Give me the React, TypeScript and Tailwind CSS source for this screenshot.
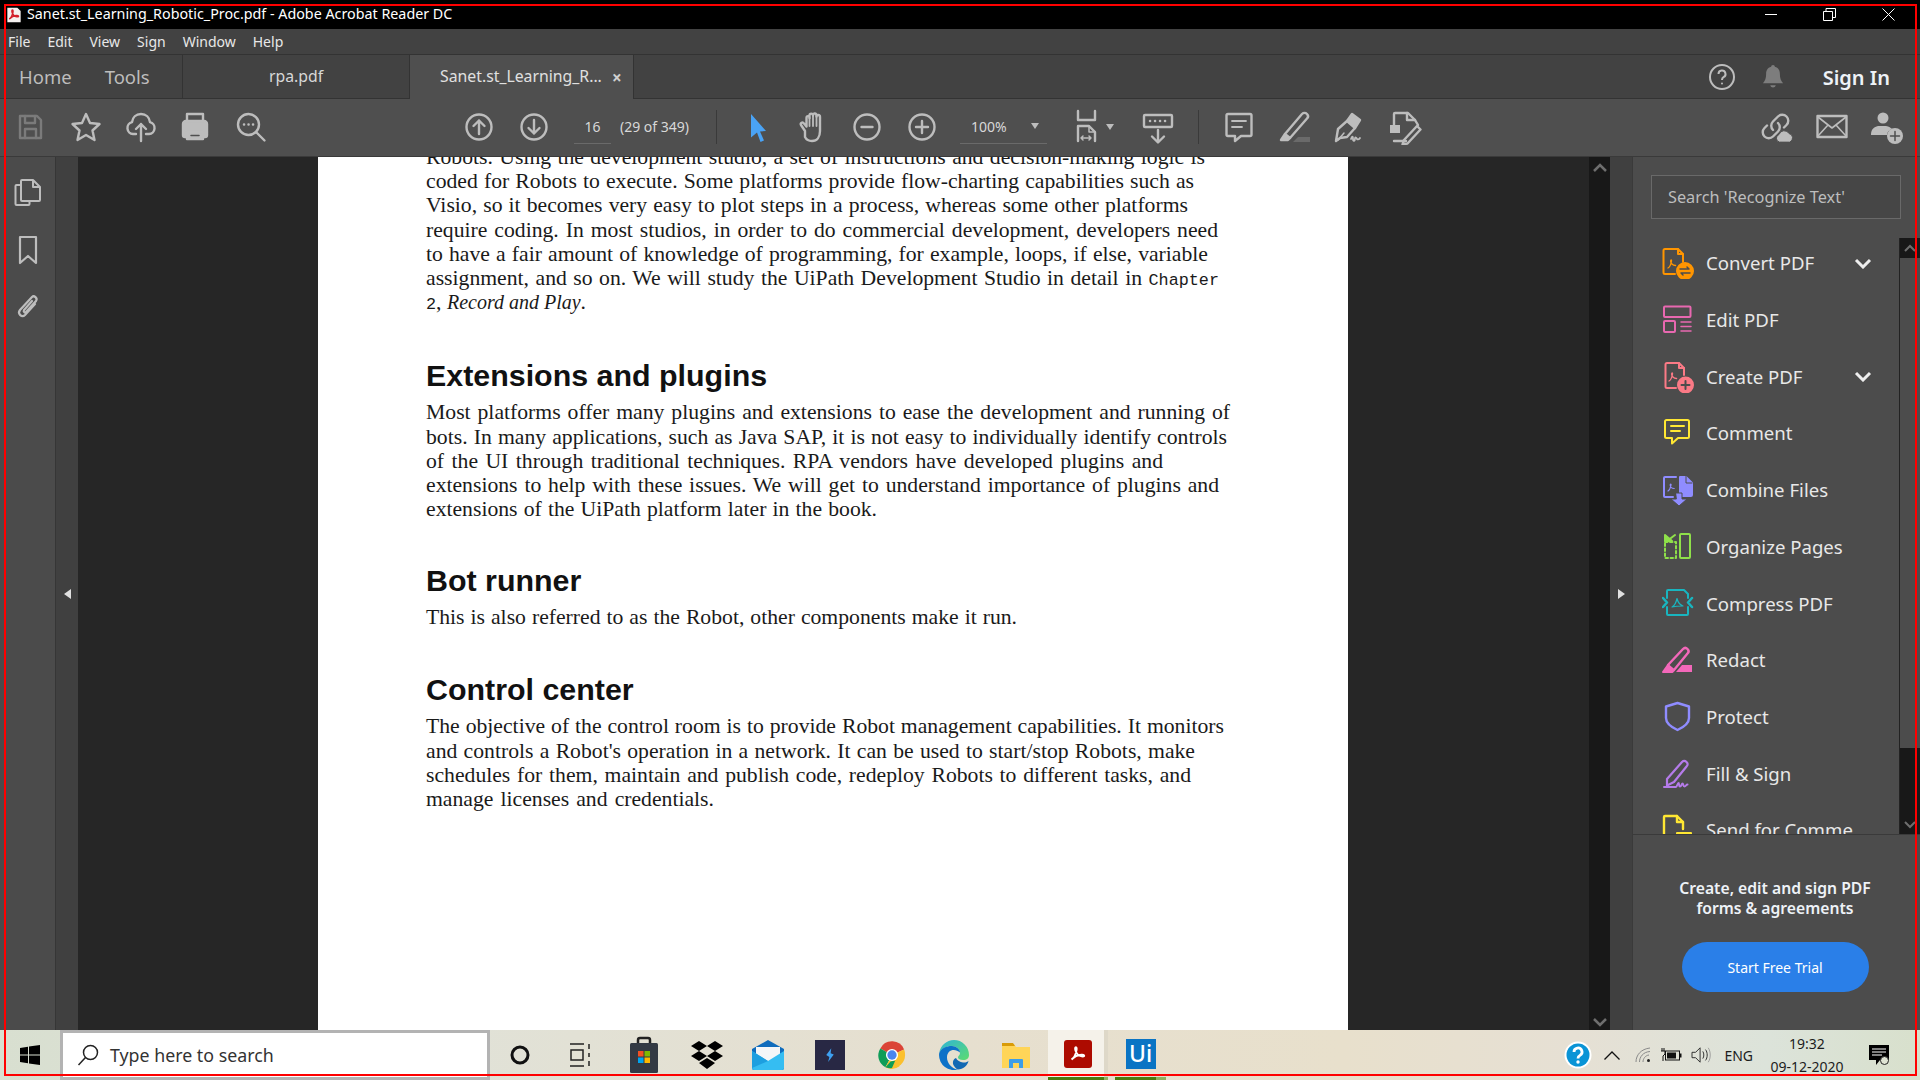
import React from 'react';

const ui = { fontFamily: '"Noto Sans", "Open Sans", sans-serif' };
const pdfSwoosh = 'M5 18c2.5-1.5 4.5-6 5.4-10 .4-2 .1-3.5-.7-3.5-.9 0-1.1 1.400-.6 3.300.9 3.200 3.600 6.200 7 6.800 1.700.3 2.700-.1 2.700-.8 0-.8-1.300-1.100-3-1-3.300.2-7.800 2-10.800 5.200z';

const Ti: React.FC<{ className?: string; children: React.ReactNode; size?: number; color?: string }> = ({ className = '', children, size = 36, color = '#bdbdbd' }) => (
    <svg viewBox="0 0 36 36" width={size} height={size} fill="none" stroke={color} strokeWidth={2.4} strokeLinecap="round" strokeLinejoin="round" className={`shrink-0 ${className}`}>
        {children}
    </svg>
);

const PanelIcon: React.FC<{ children: React.ReactNode; color: string }> = ({ children, color }) => (
    <svg viewBox="0 0 32 32" width={32} height={32} fill="none" stroke={color} strokeWidth={2} strokeLinejoin="round" strokeLinecap="round" className="shrink-0">
        {children}
    </svg>
);

const tools = [
    {
        name: 'Convert PDF', chevron: true, icon: (
            <PanelIcon color="#ff9500">
                <path d="M21 15V7l-5-5H3a1.500 1.500 0 0 0-1.500 1.500v22A1.500 1.500 0 0 0 3 27h10" />
                <path d="M16 2v5h5" />
                <path d="M6 21c2-1 3-4 3.500-7 .2-1.500-.8-1.500-.9 0-.1 2 2 4.500 5 4.500" strokeWidth={1.300} />
                <circle cx="23" cy="24" r="8" fill="#ff9500" />
                <path d="M18 22h9m-2-2 2 2M28 26h-9m2 2-2-2" stroke="#4c4c4c" strokeWidth={1.500} />
            </PanelIcon>
        ),
    },
    {
        name: 'Edit PDF', icon: (
            <PanelIcon color="#e868b0">
                <rect x="2" y="2.500" width="26.500" height="10.500" rx="1" />
                <rect x="2" y="17" width="11" height="11" rx="1" />
                <path d="M19 18h10M19 22.500h10M19 27h10" strokeWidth={1.500} />
            </PanelIcon>
        ),
    },
    {
        name: 'Create PDF', chevron: true, icon: (
            <PanelIcon color="#fb7a86">
                <path d="M22 14V7l-5-5H5a1.500 1.500 0 0 0-1.500 1.500v22A1.500 1.500 0 0 0 5 27h9" />
                <path d="M17 2v5h5" />
                <path d="M7 20c2-1 3-4 3.500-7 .2-1.500-.8-1.500-.9 0-.1 2 2 4.500 5 4.500" strokeWidth={1.300} />
                <circle cx="23.500" cy="24" r="7.500" fill="#fb7a86" />
                <path d="M23.500 20v8M19.500 24h8" stroke="#4c4c4c" strokeWidth={2} />
            </PanelIcon>
        ),
    },
    {
        name: 'Comment', icon: (
            <PanelIcon color="#ffe733">
                <path d="M4.500 3h21A1.500 1.500 0 0 1 27 4.500v15a1.500 1.500 0 0 1-1.500 1.500H16l-6 5.500V21H4.500A1.500 1.500 0 0 1 3 19.500v-15A1.500 1.500 0 0 1 4.500 3z" />
                <path d="M9 9h13M9 14h9" />
            </PanelIcon>
        ),
    },
    {
        name: 'Combine Files', icon: (
            <PanelIcon color="#8f8cff">
                <path d="M14 3H3a1 1 0 0 0-1 1v18a1 1 0 0 0 1 1h8" />
                <path d="M6 17c1.500-1 2.500-3 3-6 .2-1.200-.8-1.200-.8 0 0 2 1.800 3.500 4 3.500" strokeWidth={1.200} />
                <path d="M18 3h6l6 6v12a1 1 0 0 1-1 1H18z" fill="#8f8cff" />
                <path d="M24 2v7h6" stroke="#4c4c4c" strokeWidth={1} />
                <path d="M14 19h6v6h5l-8 7-8-7h5z" fill="#8f8cff" stroke="#4c4c4c" strokeWidth={1} />
            </PanelIcon>
        ),
    },
    {
        name: 'Organize Pages', icon: (
            <PanelIcon color="#8fe04a">
                <rect x="18" y="3" width="10" height="24" rx="1" />
                <path d="M3 11h11v16H3z" strokeDasharray="2.500 2.500" />
                <path d="M3 10V4l7 6z" fill="#8fe04a" />
                <path d="M13 4 5 10" />
            </PanelIcon>
        ),
    },
    {
        name: 'Compress PDF', icon: (
            <PanelIcon color="#19b5bf">
                <path d="M5 11V4a1 1 0 0 1 1-1h16l4 4v4M26 20v7a1 1 0 0 1-1 1H6a1 1 0 0 1-1-1v-7" />
                <path d="M1 11l4 4.500-4 4.500M30 11l-4 4.500 4 4.500" strokeWidth={2.500} />
                <path d="M10 20c2-1 4-4 5-8.500 1 4 3 6.500 6 7.500-3 0-7 0-11 1z" strokeWidth={1.200} />
            </PanelIcon>
        ),
    },
    {
        name: 'Redact', icon: (
            <PanelIcon color="#f368ba">
                <path d="M6 21 21 5c1.500-1.500 3-1.500 4.500 0s1.500 3 0 4.500L12 26" strokeWidth={2.400} />
                <path d="M6 21l6 5-1.500 2H1z" fill="#f368ba" />
                <path d="M14 28l6-7h10v7z" fill="#f368ba" stroke="none" />
            </PanelIcon>
        ),
    },
    {
        name: 'Protect', icon: (
            <PanelIcon color="#8f8cff">
                <path d="M15.500 2 27 5.500V17c0 5-5 9-11.500 12C9 26 4 22 4 17V5.500z" strokeWidth={2.400} />
            </PanelIcon>
        ),
    },
    {
        name: 'Fill & Sign', icon: (
            <PanelIcon color="#b57bea">
                <path d="M5 21 20 4c1.500-1.500 3-1.500 4.500 0s1.500 3 0 4.500L12 24l-7 3.500z" strokeWidth={2.200} />
                <path d="M2 29h12c1 0 1.500-4 2.500-4s0 3.500 1.500 3.500 1.500-3 2.500-3 .5 3 2 3 1.500-2 3-2" strokeWidth={2} />
            </PanelIcon>
        ),
    },
    {
        name: 'Send for Comme', icon: (
            <PanelIcon color="#ffe733">
                <path d="M21 15V8l-6-6H3a1 1 0 0 0-1 1v24h12" strokeWidth={2.400} />
                <path d="M15 2v6h6" strokeWidth={2.400} />
                <rect x="15" y="19" width="14" height="10" fill="#ffe733" />
            </PanelIcon>
        ),
    },
];

type Line = [string, number];

// the width of each line as set on the page
const intro: Line[] = [
    ['Robots. Using the development studio, a set of instructions and decision-making logic is', 779],
    ['coded for Robots to execute. Some platforms provide flow-charting capabilities such as', 768],
    ['Visio, so it becomes very easy to plot steps in a process, whereas some other platforms', 762],
    ['require coding. In most studios, in order to do commercial development, developers need', 792],
    ['to have a fair amount of knowledge of programming, for example, loops, if else, variable', 782],
];

const extensions: Line[] = [
    ['Most platforms offer many plugins and extensions to ease the development and running of', 804],
    ['bots. In many applications, such as Java SAP, it is not easy to individually identify controls', 801],
    ['of the UI through traditional techniques. RPA vendors have developed plugins and', 737],
    ['extensions to help with these issues. We will get to understand importance of plugins and', 793],
    ['extensions of the UiPath platform later in the book.', 451],
];

const botRunner: Line[] = [['This is also referred to as the Robot, other components make it run.', 591]];

const control: Line[] = [
    ['The objective of the control room is to provide Robot management capabilities. It monitors', 798],
    ["and controls a Robot's operation in a network. It can be used to start/stop Robots, make", 769],
    ['schedules for them, maintain and publish code, redeploy Robots to different tasks, and', 765],
    ['manage licenses and credentials.', 288],
];

const Para: React.FC<{ lines: Line[] }> = ({ lines }) => (
    <>
        {lines.map(([line, width]) => (
            <div key={line} className="h-[24.2px] leading-[24.2px] [text-align-last:justify]" style={{ width }}>{line}</div>
        ))}
    </>
);

const Heading: React.FC<{ children: React.ReactNode; className: string }> = ({ children, className }) => (
    <h2 className={`h-[36px] text-[30.400px] leading-[36px] font-bold text-[#111] whitespace-nowrap ${className}`} style={{ fontFamily: '"Liberation Sans", sans-serif' }}>
        {children}
    </h2>
);

const App: React.FC = () => {
    return (
        <div className="relative flex h-[1080px] w-[1920px] flex-col overflow-hidden bg-black" style={ui}>
            {/* title bar */}
            <div className="flex h-[29px] items-center bg-black pl-[6px] text-white">
                <svg viewBox="0 0 24 24" width={16} height={18} className="mr-[5px] shrink-0">
                    <path d="M2 1h15l5 5v17H2z" fill="#f4f0ee" />
                    <path d={pdfSwoosh} fill="none" stroke="#d3202a" strokeWidth={2.200} />
                </svg>
                <span className="text-[14.300px] leading-none whitespace-nowrap">Sanet.st_Learning_Robotic_Proc.pdf - Adobe Acrobat Reader DC</span>
                <svg width={12} height={2} className="ml-auto shrink-0"><rect width="12" height="1" fill="#fff" /></svg>
                <svg width={13} height={13} fill="none" stroke="#fff" className="ml-[46px] shrink-0">
                    <path d="M.5 3.500h9v9h-9zM3 3.500V.5h9.500v9h-3" />
                </svg>
                <svg width={13} height={13} stroke="#fff" className="ml-[46px] mr-[25px] shrink-0">
                    <path d="M.5.5l12 12M12.500.5l-12 12" />
                </svg>
            </div>

            {/* menu bar */}
            <div className="flex h-[26px] items-center gap-[17px] border-b border-[#333] bg-[#424242] pl-[8px] text-[14px] text-[#e8e8e8]">
                <span>File</span>
                <span>Edit</span>
                <span>View</span>
                <span>Sign</span>
                <span>Window</span>
                <span>Help</span>
            </div>

            {/* tabs */}
            <div className="flex h-[44px] items-stretch border-b border-[#333] bg-[#424242]">
                <div className="flex w-[183px] items-center border-r border-[#333] pl-[19px] text-[18.500px] text-[#bdbdbd]">
                    <span>Home</span>
                    <span className="ml-[33px]">Tools</span>
                </div>
                <div className="flex w-[226px] items-center justify-center text-[15.800px] text-[#d8d8d8]">rpa.pdf</div>
                <div className="-mb-px flex w-[225px] items-center border-x border-[#333] bg-[#4f4f4f] pl-[30px] text-[15.800px] text-[#e0e0e0]">
                    <span className="w-[163px] whitespace-nowrap">Sanet.st_Learning_R...</span>
                    <span className="ml-[9px] text-[17px] font-bold leading-none text-[#d0d0d0]">×</span>
                </div>
                <div className="ml-auto flex items-center">
                    <svg viewBox="0 0 28 28" width={28} height={28} fill="none" stroke="#bdbdbd" strokeWidth={2} className="mr-[26px]">
                        <circle cx="14" cy="14" r="12" />
                        <path d="M10.500 11a3.500 3.500 0 1 1 5 3.200c-1 .6-1.500 1.200-1.500 2.800" />
                        <circle cx="14" cy="20.500" r="1" fill="#bdbdbd" stroke="none" />
                    </svg>
                    <svg viewBox="0 0 24 28" width={22} height={26} fill="#7d7d7d" className="mr-[39px]">
                        <path d="M12 1c1.200 0 2 .8 2 1.800 4 1 5.500 4 5.500 8 0 4.500 1 7.500 3.500 10H1c2.500-2.500 3.500-5.500 3.500-10 0-4 1.500-7 5.500-8C10 1.800 10.800 1 12 1zM9 23h6c-.5 1.500-1.500 2.500-3 2.500S9.500 24.500 9 23z" />
                    </svg>
                    <span className="mr-[30px] pt-[2px] text-[20px] font-semibold text-[#eef2f7]">Sign In</span>
                </div>
            </div>

            {/* toolbar */}
            <div className="flex h-[58px] items-center border-b border-[#3a3a3a] bg-[#4f4f4f] pb-[2px] pl-[12px] text-[#d8d8d8]">
                <Ti color="#7b7b7b">
                    <path d="M8 7h17l4 4v18H8z" />
                    <path d="M13 7v7h10V7M13 29v-9h11v9" />
                </Ti>
                <Ti className="ml-[20px]">
                    <path d="M18 5l4 9 9.500 1-7 6.500 2 9.500-8.500-5-8.500 5 2-9.500-7-6.500 9.500-1z" />
                </Ti>
                <Ti className="ml-[19px]">
                    <path d="M13 25H10a6 6 0 0 1-1-11.800C9.500 8.500 13 5 18 5s8.500 3.500 9 8.200A6 6 0 0 1 26 25h-3" />
                    <path d="M18 32V15m-5 5 5-5 5 5" />
                </Ti>
                <Ti className="ml-[18px]">
                    <path d="M10 12V5h16v7" />
                    <path d="M9 12h18a3 3 0 0 1 3 3v11a2 2 0 0 1-2 2h-2v-5H10v5H8a2 2 0 0 1-2-2V15a3 3 0 0 1 3-3zM10 23h16v7H10z" fill="#bdbdbd" stroke="#bdbdbd" />
                    <path d="M14 26.500h8" stroke="#4f4f4f" strokeWidth={1.500} />
                </Ti>
                <Ti className="ml-[20px]">
                    <circle cx="15.500" cy="15.500" r="10.500" />
                    <path d="M23 23l8.500 8.500" />
                    <path d="M11 15.500h.1M15.500 15.500h.1M20 15.500h.1" strokeWidth={2.500} />
                </Ti>

                <Ti className="ml-[192px]">
                    <circle cx="18" cy="18" r="12.500" />
                    <path d="M18 25V11.500m-5.500 5.500 5.500-5.500 5.500 5.500" />
                </Ti>
                <Ti className="ml-[19px]">
                    <circle cx="18" cy="18" r="12.500" />
                    <path d="M18 11v13.500m-5.500-5.500 5.500 5.500 5.500-5.500" />
                </Ti>
                <div className="ml-[22px] flex h-[34px] w-[37px] items-center justify-center border-b border-[#6a6a6a] text-[14px]">16</div>
                <span className="ml-[9px] whitespace-nowrap text-[14px]">(29 of 349)</span>
                <div className="ml-[27px] h-[34px] w-px bg-[#3a3a3a]" />

                <svg viewBox="0 0 36 36" width={36} height={36} fill="#4aa3f5" className="ml-[23px] shrink-0">
                    <path d="M11 5l15 17-6 .5 4 9-3.500 1.500-3.500-9.500-6 5z" />
                </svg>
                <Ti className="ml-[19px]">
                    <path d="M10 22 6 16c-1-2 1.500-3.500 3-1.500l2.500 3V9c0-2.500 3-2.500 3 0V6.500c0-2.500 3.500-2.500 3.500 0V6c0-2 3.500-2 3.500.5v1c0-2 3.500-2 3.500.5v14c0 6-3 10-8 10-4 0-6-2-7-4z" />
                    <path d="M14.500 9v8M18 6.500V17M21.500 7v10" strokeWidth={1.800} />
                </Ti>
                <Ti className="ml-[18px]">
                    <circle cx="18" cy="18" r="12.500" />
                    <path d="M12.500 18h11" />
                </Ti>
                <Ti className="ml-[19px]">
                    <circle cx="18" cy="18" r="12.500" />
                    <path d="M12 18h12M18 12v12" />
                </Ti>
                <div className="ml-[20px] flex h-[34px] w-[87px] items-center border-b border-[#6a6a6a] pl-[11px] text-[14px]">
                    <span>100%</span>
                    <span className="ml-[24px] h-0 w-0 border-x-[4px] border-t-[6px] border-x-transparent border-t-[#bdbdbd]" />
                </div>
                <Ti className="ml-[22px]">
                    <path d="M9 2v9h17V2" />
                    <path d="M9 32V17h11l6 6v9" />
                    <path d="M20 17v6h6M12 29h10m-8-2-2 2 2 2m6-4 2 2-2 2" strokeWidth={1.500} />
                </Ti>
                <span className="ml-px h-0 w-0 border-x-[4px] border-t-[6px] border-x-transparent border-t-[#bdbdbd]" />
                <Ti className="ml-[26px]">
                    <rect x="4" y="6" width="28" height="12" rx="1" />
                    <path d="M10 12h.1M15 12h.1M20 12h.1M25 12h.1" strokeWidth={2.500} />
                    <path d="M18 21v12m-6-5.500 6 6 6-6" />
                </Ti>
                <div className="ml-[22px] h-[34px] w-px bg-[#3a3a3a]" />
                <Ti className="ml-[22px]">
                    <path d="M7 5h22a1.500 1.500 0 0 1 1.500 1.500v19A1.500 1.500 0 0 1 29 27h-9l-6 5v-5H7a1.500 1.500 0 0 1-1.500-1.500v-19A1.500 1.500 0 0 1 7 5z" />
                    <path d="M11 12h14M11 18h10" strokeWidth={1.800} />
                </Ti>
                <Ti className="ml-[20px]">
                    <path d="M8 25 25 5c1.500-1.500 3.500-1.500 5 0s1.500 3 0 4.500L13 29z" />
                    <path d="M8 25l-4 6h7l2-2" fill="#bdbdbd" />
                    <path d="M16 33l5-5h12v5z" fill="#6a6a6a" stroke="none" />
                </Ti>
                <Ti className="ml-[19px]">
                    <path d="M8 29 4 32l2-12 9-8 8 7-8 9z" />
                    <path d="M15 12l5-7 8 6-5 8" fill="#bdbdbd" />
                    <path d="M6 31l6-7" strokeWidth={1.500} />
                    <path d="M19 30c1-3 2-3 2 0s2 2 2-.5 2 0 2 .5 2 1 3-1" strokeWidth={1.800} />
                </Ti>
                <Ti className="ml-[18px]">
                    <path d="M8 16V5a1 1 0 0 1 1-1h13l7 7 3 5M8 32h12" />
                    <path d="M21 4v7h8" />
                    <path d="M18 31l13-14 3.500 3.500-13 14-5 1z" />
                    <path d="M4 16h10v8H4z" fill="#bdbdbd" stroke="none" />
                </Ti>

                <Ti className="ml-auto">
                    <path d="M14 21a6 6 0 0 1 0-8.500l5-5a6 6 0 0 1 8.500 8.500l-2.500 2.500" />
                    <path d="M19 14a6 6 0 0 1 0 8.500l-5 5A6 6 0 0 1 5.500 19L8 16.500" />
                    <path d="M20 33a4 4 0 0 1 0-7.500 5.500 5.500 0 0 1 10-1 4.500 4.500 0 0 1 1 8.500z" fill="#bdbdbd" stroke="#4f4f4f" strokeWidth={1} />
                </Ti>
                <Ti className="ml-[19px]">
                    <rect x="3.500" y="7" width="29" height="21" />
                    <path d="M4 8l14 11L32 8M4 27l10-11M32 27 22 16" strokeWidth={1.600} />
                </Ti>
                <Ti className="ml-[19px] mr-[15px]">
                    <circle cx="14" cy="9" r="5.500" fill="#bdbdbd" stroke="none" />
                    <path d="M2 26c0-6 3-8 7-9h8c3 .5 5 2 6 3-3 1-5 3-5 6z" fill="#bdbdbd" stroke="none" />
                    <circle cx="26" cy="27" r="8" fill="#bdbdbd" stroke="none" />
                    <path d="M26 22.500v9M21.500 27h9" stroke="#4f4f4f" strokeWidth={1.500} />
                </Ti>
            </div>

            {/* body */}
            <div className="flex min-h-0 flex-1 bg-[#262626]">
                <div className="flex w-[56px] shrink-0 flex-col items-center border-r border-[#363636] bg-[#4b4b4b] pt-[20px]">
                    <svg viewBox="0 0 30 30" width={30} height={30} fill="none" stroke="#bdbdbd" strokeWidth={2} strokeLinejoin="round" className="ml-[1px]">
                        <path d="M8 8H3.500a1 1 0 0 0-1 1v18a1 1 0 0 0 1 1h12a1 1 0 0 0 1-1v-3" />
                        <path d="M9 3h11l7 7v13a1 1 0 0 1-1 1H9a1 1 0 0 1-1-1V4a1 1 0 0 1 1-1z" />
                        <path d="M20 3v7h7" />
                    </svg>
                    <svg viewBox="0 0 24 30" width={24} height={30} fill="none" stroke="#bdbdbd" strokeWidth={2.200} strokeLinejoin="round" className="mt-[28px]">
                        <path d="M4 2h16v26l-8-7-8 7z" />
                    </svg>
                    <svg viewBox="0 0 30 30" width={30} height={30} fill="none" stroke="#bdbdbd" strokeWidth={2.200} strokeLinecap="round" className="mt-[26px]">
                        <path d="M22 13 12 24c-3 3-8-1-5-5L19 6c2-2 6 1 4 4L13 21c-1 1-3 0-2-2l8-9" />
                    </svg>
                </div>
                <div className="flex w-[22px] shrink-0 items-center justify-center bg-[#404040]">
                    <span className="h-0 w-0 border-y-[5px] border-r-[7px] border-y-transparent border-r-[#e0e0e0]" />
                </div>

                <div className="flex min-w-0 flex-1">
                    <div className="ml-[240px] w-[1030px] overflow-hidden bg-white pl-[108px] text-[21.700px] text-[#1a1a1a]" style={{ fontFamily: '"Liberation Serif", serif' }}>
                        <div className="-mt-[12px]">
                            <Para lines={intro} />
                            <div className="h-[24.2px] w-[793px] leading-[24.2px] [text-align-last:justify]">
                                assignment, and so on. We will study the UiPath Development Studio in detail in{' '}
                                <span className="text-[16.800px]" style={{ fontFamily: '"Liberation Mono", monospace' }}>Chapter</span>
                            </div>
                            <div className="h-[24.2px] leading-[24.2px] whitespace-nowrap">
                                <span className="text-[16.800px]" style={{ fontFamily: '"Liberation Mono", monospace' }}>2</span>, <i className="text-[20px]">Record and Play</i>.
                            </div>
                            <Heading className="mt-[43px]">Extensions and plugins</Heading>
                            <div className="mt-[7px]"><Para lines={extensions} /></div>
                            <Heading className="mt-[41px]">Bot runner</Heading>
                            <div className="mt-[7px]"><Para lines={botRunner} /></div>
                            <Heading className="mt-[42px]">Control center</Heading>
                            <div className="mt-[7px]"><Para lines={control} /></div>
                        </div>
                    </div>
                </div>

                <div className="flex w-[21px] shrink-0 flex-col items-center justify-between bg-[#181818] py-[6px] pb-[3px]">
                    <svg width={14} height={9} fill="none" stroke="#6e6e6e" strokeWidth={2.500}><path d="M1 8l6-6 6 6" /></svg>
                    <svg width={14} height={9} fill="none" stroke="#6e6e6e" strokeWidth={2.500}><path d="M1 1l6 6 6-6" /></svg>
                </div>

                <div className="flex w-[23px] shrink-0 items-center justify-center border-r border-[#3a3a3a] bg-[#404040]">
                    <span className="h-0 w-0 border-y-[5px] border-l-[7px] border-y-transparent border-l-[#e0e0e0]" />
                </div>

                {/* tools panel */}
                <div className="flex w-[287px] shrink-0 flex-col bg-[#4c4c4c]">
                    <div className="flex h-[678px] border-b border-[#3a3a3a]">
                        <div className="flex min-w-0 flex-1 flex-col">
                            <div className="ml-[18px] mt-[18px] flex h-[44px] w-[250px] shrink-0 items-center border border-[#696969] bg-[#464646] pl-[16px] pt-[1px] text-[16.300px] text-[#bdbdbd]">
                                Search 'Recognize Text'
                            </div>
                            <div className="mt-[16px] min-h-0 flex-1 overflow-hidden">
                                {tools.map((tool) => (
                                    <div key={tool.name} className="flex h-[56.7px] items-center pl-[29px] text-[18.600px] text-[#e8e8e8]">
                                        {tool.icon}
                                        <span className="ml-[12px] whitespace-nowrap">{tool.name}</span>
                                        {tool.chevron && (
                                            <svg width={18} height={11} fill="none" stroke="#eee" strokeWidth={3} className="ml-auto mr-[27px]">
                                                <path d="M2 2l7 7 7-7" />
                                            </svg>
                                        )}
                                    </div>
                                ))}
                            </div>
                        </div>
                        <div className="mt-[81px] flex w-[21px] shrink-0 flex-col border-l border-[#222]">
                            <div className="flex h-[20px] items-center justify-center bg-[#181818]">
                                <svg width={12} height={8} fill="none" stroke="#6e6e6e" strokeWidth={2}><path d="M1 7l5-5 5 5" /></svg>
                            </div>
                            <div className="h-[490px] bg-[#4c4c4c]" />
                            <div className="flex flex-1 items-end justify-center bg-[#181818] pb-[5px]">
                                <svg width={12} height={8} fill="none" stroke="#6e6e6e" strokeWidth={2}><path d="M1 1l5 5 5-5" /></svg>
                            </div>
                        </div>
                    </div>
                    <div className="flex flex-1 flex-col items-center pr-[3px] pt-[43px]">
                        <div className="text-center text-[15.700px] font-semibold leading-[20px] text-[#eef2f7]">
                            Create, edit and sign PDF<br />forms &amp; agreements
                        </div>
                        <div className="mt-[24px] flex h-[50px] w-[187px] items-center justify-center rounded-full bg-[#2a7fe8] text-[14px] text-white">
                            Start Free Trial
                        </div>
                    </div>
                </div>
            </div>

            {/* taskbar */}
            <div className="flex h-[50px] shrink-0 items-center bg-[linear-gradient(90deg,#d8dfd0_0%,#e0e2d8_20%,#e6dfcf_50%,#e8e0cc_70%,#e6e0d4_82%,#dce3da_92%,#d8e0cc_100%)] text-[#1c1c1c]">
                <svg viewBox="0 0 20 20" width={20} height={20} fill="#000" className="ml-[20px] shrink-0">
                    <path d="M0 3l8-1.200V9.500H0zM9 1.600 20 0v9.500H9zM0 10.500h8v7.700L0 17zM9 10.500h11V20L9 18.400z" />
                </svg>
                <div className="ml-[20px] flex h-[50px] w-[430px] shrink-0 items-center border-x-[3px] border-t-[3px] border-b-[3px] border-[#b3b3b3] bg-white pl-[13px]">
                    <svg viewBox="0 0 24 24" width={24} height={24} fill="none" stroke="#222" strokeWidth={1.500}>
                        <circle cx="14.500" cy="9.500" r="7" />
                        <path d="M9.500 14.500 2.500 22" />
                    </svg>
                    <span className="ml-[10px] text-[17.800px] text-[#333]">Type here to search</span>
                </div>
                <svg width={20} height={20} fill="none" stroke="#111" strokeWidth={3} className="ml-[20px] shrink-0">
                    <circle cx="10" cy="10" r="8" />
                </svg>
                <svg viewBox="0 0 24 24" width={24} height={24} fill="none" stroke="#222" strokeWidth={1.500} className="ml-[38px] shrink-0">
                    <path d="M2 1h14M2 23h14M3 7h12v10H3z" />
                    <path d="M21 1v5M21 18v5M21 10v4" />
                </svg>
                <svg viewBox="0 0 30 40" width={30} height={40} className="ml-[37px] shrink-0">
                    <path d="M9 9V5a2 2 0 0 1 2-2h8a2 2 0 0 1 2 2v4" fill="none" stroke="#222" strokeWidth={2.500} />
                    <rect x="1" y="8" width="28" height="30" rx="1.500" fill="#333a44" />
                    <rect x="9" y="16" width="5.500" height="5.500" fill="#f25022" />
                    <rect x="15.500" y="16" width="5.500" height="5.500" fill="#7fba00" />
                    <rect x="9" y="22.500" width="5.500" height="5.500" fill="#00a4ef" />
                    <rect x="15.500" y="22.500" width="5.500" height="5.500" fill="#ffb900" />
                </svg>
                <svg viewBox="0 0 32 30" width={32} height={30} fill="#000" className="ml-[32px] shrink-0">
                    <path d="M8 1l8 5-8 5-8-5zM24 1l8 5-8 5-8-5zM8 11l8 5-8 5-8-5zM24 11l8 5-8 5-8-5zM16 18l8 5-8 6-8-6z" />
                </svg>
                <svg viewBox="0 0 32 30" width={32} height={30} className="ml-[29px] shrink-0">
                    <path d="M0 9 16 0l16 9v19a2 2 0 0 1-2 2H2a2 2 0 0 1-2-2z" fill="#0f6cbd" />
                    <path d="M4 7h24v9L16 22 4 16z" fill="#f4f6f8" />
                    <path d="M0 11l16 10 16-10v17a2 2 0 0 1-2 2H2a2 2 0 0 1-2-2z" fill="#35bdf2" />
                    <path d="M0 28V11l16 10z" fill="#1d9fe0" />
                </svg>
                <div className="ml-[31px] flex h-[30px] w-[30px] shrink-0 items-center justify-center bg-[#282844]">
                    <svg viewBox="0 0 16 24" width={10} height={20}>
                        <path d="M10 1 2 12l5 3-2 8 9-12-5-2z" fill="#3ea0f0" />
                    </svg>
                </div>
                <svg viewBox="0 0 30 30" width={28} height={28} className="ml-[33px] shrink-0">
                    <path d="M15 15 2.500 8A14 14 0 0 1 28 9z" fill="#db4437" />
                    <path d="M15 15H29a14 14 0 0 1-14 14z" fill="#fbc02d" />
                    <path d="M15 15l-7 13A14 14 0 0 1 2.500 8z" fill="#0f9d58" />
                    <path d="M15 15 28 9a14 14 0 0 1 1 6z" fill="#fbc02d" />
                    <path d="M15 15l8 12A14 14 0 0 1 8 28z" fill="#fbc02d" />
                    <path d="M8 28l5.500-6 5-1L15 29a14 14 0 0 1-7-1z" fill="#0f9d58" />
                    <circle cx="15" cy="15" r="6.500" fill="#fff" />
                    <circle cx="15" cy="15" r="5" fill="#4a85f0" />
                </svg>
                <svg viewBox="0 0 30 30" width={30} height={30} className="ml-[33px] shrink-0">
                    <defs>
                        <linearGradient id="edgeA" x1="0" y1="0" x2="1" y2="1">
                            <stop offset="0" stopColor="#2fb4d8" />
                            <stop offset="1" stopColor="#5ddc6e" />
                        </linearGradient>
                    </defs>
                    <path d="M15 0a15 15 0 0 1 15 15c0 3-2 5-6 5-3 0-5-1-5-2.500 0-2 2-2 2-4.500 0-4-4-7-8-7C7 6 2 9 .2 13 1.500 5.500 7.500 0 15 0z" fill="url(#edgeA)" />
                    <path d="M.2 13C2 8.500 7 6 13 6c4 0 8 3 8 6.500-5-4.500-13-3-13 5 0 5 4 11 11 12A15 15 0 0 1 0 15z" fill="#0d72c8" />
                    <path d="M19 29.500c5 0 9.500-4 10.500-8.500-1 1-3 1.800-5.500 1.500-3-.4-6-2-7-4.500-3 1-4 5-2 8 1 1.500 2.500 3 4 3.500z" fill="#1268b3" />
                </svg>
                <svg viewBox="0 0 28 28" width={28} height={28} className="ml-[33px] shrink-0">
                    <path d="M0 3h12l2 3h14v21H0z" fill="#ffd558" />
                    <path d="M0 2h11l2 3H0z" fill="#d99b08" />
                    <path d="M7 27v-8a1 1 0 0 1 1-1h12a1 1 0 0 1 1 1v8h-4v-5h-6v5z" fill="#3d9ee8" />
                </svg>
                <div className="ml-[18px] flex h-[50px] w-[56px] shrink-0 flex-col bg-[#f5f2ea]">
                    <div className="flex flex-1 items-center justify-center pl-[4px]">
                        <div className="flex h-[28px] w-[28px] items-center justify-center rounded-[3px] bg-[#ad0b00]">
                            <svg viewBox="0 0 24 24" width={22} height={22}>
                                <path d={pdfSwoosh} fill="none" stroke="#fff" strokeWidth={2} />
                            </svg>
                        </div>
                    </div>
                    <div className="h-[3px] bg-[#4a7c10]" />
                </div>
                <div className="flex h-[50px] w-[4px] shrink-0 flex-col bg-[#ded8c8]">
                    <div className="mt-auto h-[3px] bg-[#8fb060]" />
                </div>
                <div className="ml-[7px] flex h-[50px] w-[51px] shrink-0 flex-col">
                    <div className="flex flex-1 items-center justify-center">
                        <div className="flex h-[30px] w-[30px] items-center justify-center bg-[#0a74c4] text-[23px] font-medium leading-none text-white">Ui</div>
                    </div>
                    <div className="h-[3px] bg-[linear-gradient(90deg,#4a7c10_80%,#8fb060_80%)]" />
                </div>

                <svg viewBox="0 0 28 28" width={28} height={28} className="ml-auto shrink-0">
                    <circle cx="14" cy="14" r="13.500" fill="#fff" />
                    <circle cx="14" cy="14" r="11.500" fill="#0a94d6" />
                    <path d="M10 11a4 4 0 1 1 6 3.400c-1.400.8-2 1.400-2 3" fill="none" stroke="#fff" strokeWidth={2.800} />
                    <circle cx="14" cy="21" r="1.700" fill="#fff" />
                </svg>
                <svg width={16} height={9} fill="none" stroke="#111" strokeWidth={1.300} className="ml-[12px] shrink-0">
                    <path d="M.5 8.500 8 1l7.500 7.500" />
                </svg>
                <svg viewBox="0 0 16 16" width={16} height={16} fill="none" stroke="#8a8a8a" className="ml-[15px] shrink-0">
                    <path d="M1 15C1 8 6 2 15 1M4.500 15C4.500 10 8 5 15 4.500M8 15c0-3 2-6.500 6-7" />
                    <circle cx="13.500" cy="13.500" r="1.500" fill="#222" stroke="none" />
                </svg>
                <svg viewBox="0 0 22 14" width={22} height={14} className="ml-[9px] shrink-0">
                    <rect x="5.500" y="3" width="14" height="9" fill="none" stroke="#111" />
                    <rect x="7" y="4.500" width="9" height="6" fill="#111" />
                    <rect x="19.500" y="5.500" width="2" height="4" fill="#111" />
                    <path d="M2 0v3M4 0v3M1 3h4v3L3 8v5" fill="none" stroke="#111" />
                </svg>
                <svg viewBox="0 0 22 20" width={20} height={18} fill="none" stroke="#222" className="ml-[9px] shrink-0">
                    <path d="M1 7h4l5-5v16l-5-5H1z" />
                    <path d="M13 6c1.500 2 1.500 6 0 8M16 4c2.500 3 2.500 9 0 12" />
                    <path d="M19 2c3 4 3 12 0 16" stroke="#999" />
                </svg>
                <span className="ml-[13px] text-[14px]">ENG</span>
                <div className="ml-[15px] flex w-[78px] flex-col items-center text-[14px] leading-[23px]">
                    <span>19:32</span>
                    <span>09-12-2020</span>
                </div>
                <svg viewBox="0 0 22 22" width={22} height={22} className="ml-[22px] mr-[30px] shrink-0">
                    <path d="M1 1h20v15h-9l-4 5v-5H1z" fill="#000" />
                    <path d="M4 5h14M4 8h14M4 11h10" stroke="#fff" />
                    <circle cx="16.500" cy="16.500" r="4" fill="#dfe4d4" stroke="#222" />
                </svg>
            </div>

            {/* red annotation frame */}
            <div className="pointer-events-none absolute bottom-[4px] left-[4px] right-[3px] top-[4px] border-2 border-[#ff0000]" />
        </div>
    );
};

export default App;
